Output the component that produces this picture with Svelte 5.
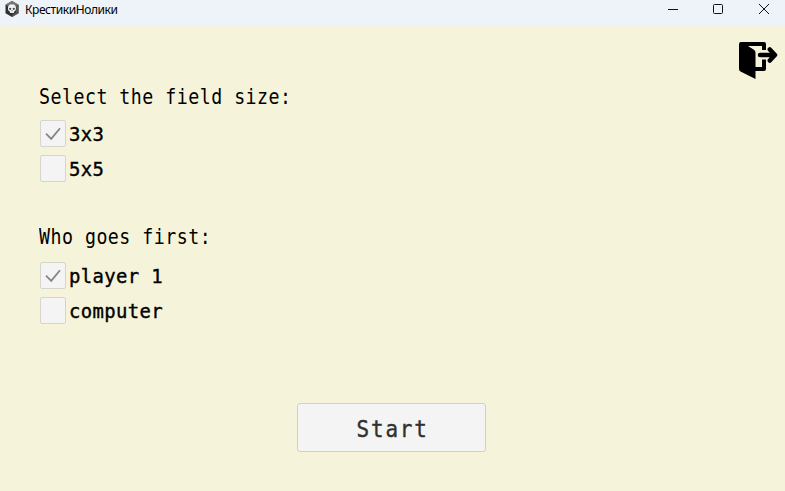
<script>
  let size = $state('3x3');
  let first = $state('player 1');
  const groups = [
    { id: 'size', title: 'Select the field size:', options: ['3x3', '5x5'] },
    { id: 'first', title: 'Who goes first:', options: ['player 1', 'computer'] }
  ];
  const chosen = (id) => (id === 'size' ? size : first);
  function pick(id, value) {
    if (id === 'size') size = value;
    else first = value;
  }
</script>

<div class="window">
  <header>
    <svg class="logo" width="14" height="16" viewBox="0 0 14 16">
      <path d="M7 0 13.5 3.8v8.4L7 16 .5 12.2V3.8z" fill="#303030" />
      <path d="M7 0 13.5 3.8 11 5 7 3 3 5 .5 3.8z" fill="#777" />
      <path d="M13.5 3.8v8.4L7 16v-2l4-3V5z" fill="#555" />
      <path d="M7 3.2c3 0 4.2 2 4 4.2-.1 1.6-.7 2.7-1.9 3.1L8.8 12H5.2l-.3-1.5C3.7 10 3 9 3 7.4c-.2-2.2 1-4.2 4-4.2z" fill="#f0f2f4" />
      <circle cx="5.2" cy="7.8" r="1.1" fill="#444" /><circle cx="8.8" cy="7.8" r="1.1" fill="#444" />
      <path d="M6.5 9.8h1" stroke="#555" />
    </svg>
    <span class="name">КрестикиНолики</span>
    <div class="controls">
      <svg width="12" height="12" viewBox="0 0 12 12"><path d="M1 6.5h10" /></svg>
      <svg width="12" height="12" viewBox="0 0 12 12"><rect x="1.5" y="1.5" width="9" height="9" rx="1" /></svg>
      <svg width="12" height="12" viewBox="0 0 12 12"><path d="m1 1 10 10M11 1 1 11" /></svg>
    </div>
  </header>

  <main>
    <button class="exit" aria-label="Exit">
      <svg width="40" height="38" viewBox="0 0 40 38">
        <path d="M3 1h23q2 0 2 2v6h-4V5H10l5.500 3.500q2 1 2 3V26H24v-7.500h4V28q0 2-2 2h-8.500v8L2.500 30.500Q1 29.500 1 28V3q0-2 2-2z" />
        <path d="M22 14H36M31.800 8.500 37 14l-5.200 5.500" fill="none" stroke="#000" stroke-width="4.500" stroke-linecap="round" stroke-linejoin="round" />
      </svg>
    </button>

    {#each groups as group}
      <section>
        <h2><span>{group.title}</span></h2>
        {#each group.options as option}
          <label>
            <input type="checkbox" checked={chosen(group.id) === option} onchange={() => pick(group.id, option)} />
            <i class="box">
              {#if chosen(group.id) === option}
                <svg width="16" height="14" viewBox="0 0 16 14"><path d="m1 6.700 5.200 5.200L15 1.300" /></svg>
              {/if}
            </i>
            <span>{option}</span>
          </label>
        {/each}
      </section>
    {/each}

    <button class="start"><span>Start</span></button>
  </main>
</div>

<style>
  .window {
    width: 785px;
    height: 491px;
    overflow: hidden;
    background: #f5f4da;
    color: #000;
    font-family: "DejaVu Sans Mono", monospace;
  }
  header {
    height: 26px;
    box-sizing: border-box;
    padding: 1px 15px 0 5px;
    display: flex;
    align-items: flex-start;
    background: #eef3f9;
  }
  .name {
    margin: 1px 0 0 6px;
    font: 12px/15px "Noto Sans", sans-serif;
    letter-spacing: -0.43px;
  }
  .controls {
    margin: 2px 0 0 auto;
    display: flex;
    gap: 33.5px;
  }
  .controls svg {
    fill: none;
    stroke: #111;
  }
  .controls svg:nth-child(2) {
    margin: 0 1px 0 -1px;
  }
  main {
    display: flex;
    flex-direction: column;
    height: 465px;
    position: relative;
  }
  .exit {
    position: absolute;
    right: 7px;
    top: 15px;
    padding: 0;
    border: 0;
    background: none;
    line-height: 0;
  }
  section {
    padding: 56px 0 0 40px;
  }
  section + section {
    padding-top: 32px;
  }
  h2 {
    margin: 0 0 8px;
    height: 30px;
    font-weight: 400;
    font-size: 21px;
    line-height: 30px;
  }
  section + section h2 {
    margin-bottom: 10px;
  }
  h2 span,
  label span,
  .start span {
    display: inline-block;
    white-space: pre;
    transform-origin: left center;
  }
  h2 span {
    letter-spacing: 0.55px;
    transform: scaleX(0.87);
    margin-left: -1px;
  }
  label {
    display: flex;
    align-items: center;
    height: 27px;
    margin-bottom: 8px;
    font-size: 20px;
    line-height: 27px;
  }
  label span {
    margin-left: 3px;
    letter-spacing: 0.4px;
    transform: translateY(1px) scaleX(0.945);
    -webkit-text-stroke: 0.4px #000;
  }
  input {
    position: absolute;
    opacity: 0;
    pointer-events: none;
  }
  .box {
    width: 26px;
    height: 27px;
    box-sizing: border-box;
    display: grid;
    place-items: center;
    border: 1px solid #d5d5cb;
    border-radius: 2px;
    background: #f4f4f5;
  }
  .box svg {
    fill: none;
    stroke: #858585;
    stroke-width: 1.8;
  }
  .start {
    width: 189px;
    height: 49px;
    box-sizing: border-box;
    margin: auto 0 39px 297px;
    padding: 3px 0 0;
    border: 1px solid #d0d0c5;
    border-radius: 3px;
    background: #f4f4f4;
    color: #303030;
    font: 23px/30px "DejaVu Sans Mono", monospace;
  }
  .start span {
    margin-left: 2px;
    letter-spacing: 2px;
    transform-origin: center;
    transform: scaleX(0.91);
    -webkit-text-stroke: 0.4px #303030;
  }
</style>
